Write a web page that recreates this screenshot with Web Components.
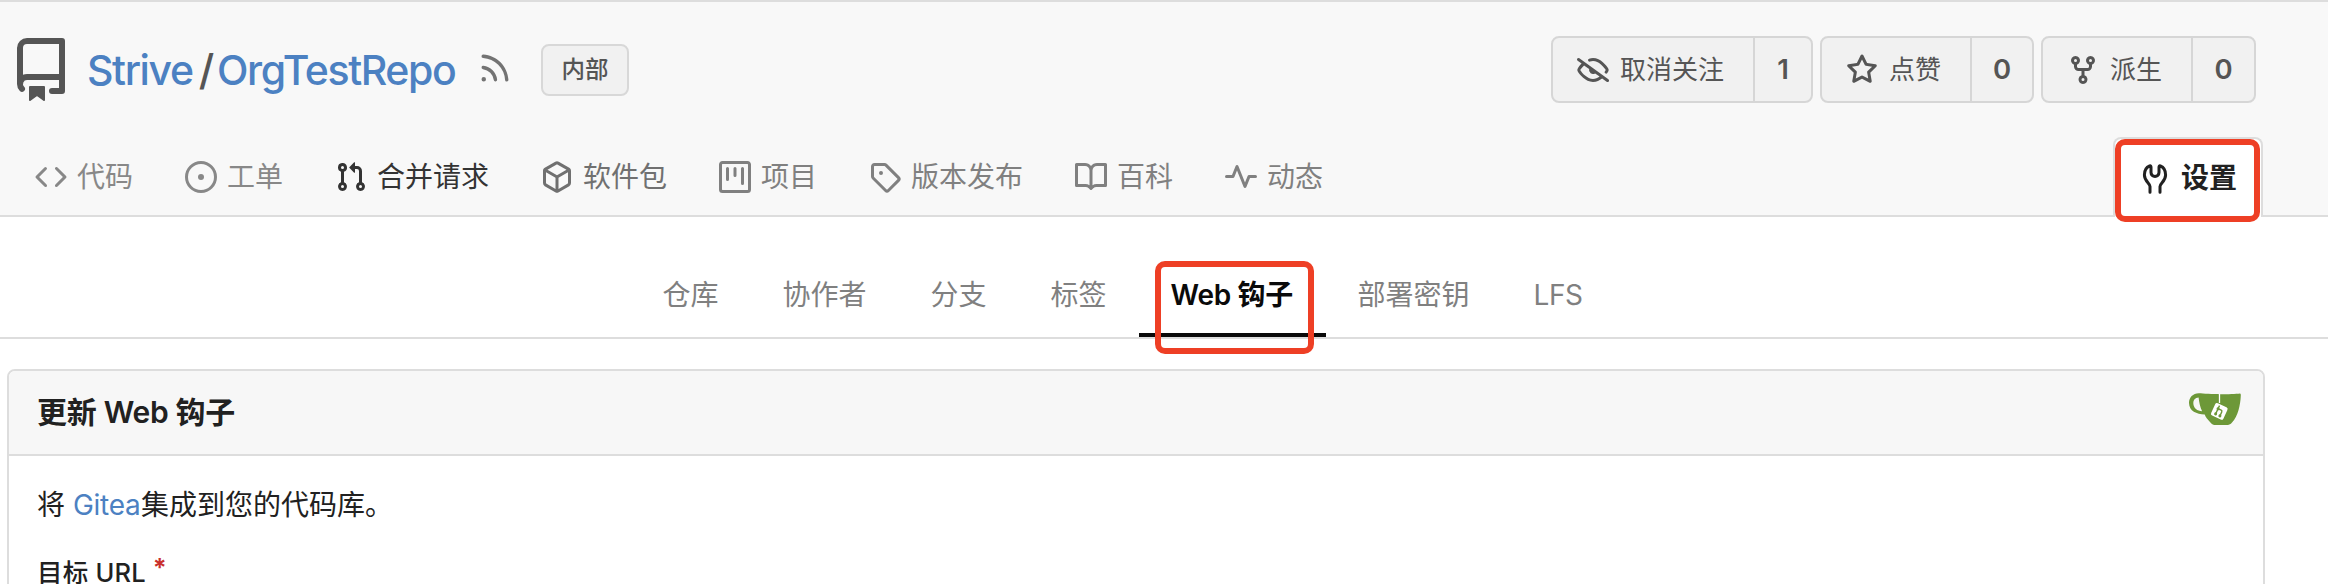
<!DOCTYPE html>
<html lang="zh-CN">
<head>
<meta charset="utf-8">
<title>Strive/OrgTestRepo</title>
<style>
body{margin:0;width:2328px;height:584px;overflow:hidden;background:#fff;color:#212121;font:28px/40px Inter,"Noto Sans CJK SC",sans-serif}
</style>
</head>
<body>
<repo-page></repo-page>
<script>
const ICONS={
repo:'<path d="M2 2.5A2.5 2.5 0 0 1 4.5 0h8.75a.75.75 0 0 1 .75.75v12.5a.75.75 0 0 1-.75.75h-2.5a.75.75 0 0 1 0-1.5h1.75v-2h-8a1 1 0 0 0-.714 1.7.75.75 0 1 1-1.072 1.05A2.495 2.495 0 0 1 2 11.5Zm10.5-1h-8a1 1 0 0 0-1 1v6.708A2.486 2.486 0 0 1 4.5 9h8ZM5 12.25a.25.25 0 0 1 .25-.25h3.5a.25.25 0 0 1 .25.25v3.25a.25.25 0 0 1-.4.2l-1.45-1.087a.249.249 0 0 0-.3 0L5.4 15.7a.25.25 0 0 1-.4-.2Z"/>',
rss:'<path d="M2.002 2.725a.75.75 0 0 1 .797-.699C8.79 2.42 13.58 7.21 13.974 13.201a.75.75 0 0 1-1.497.098 10.502 10.502 0 0 0-9.776-9.776.747.747 0 0 1-.7-.798ZM2.84 7.05h-.002a7.002 7.002 0 0 1 6.113 6.111.75.75 0 0 1-1.49.178 5.503 5.503 0 0 0-4.8-4.8.75.75 0 0 1 .179-1.489ZM2 13a1 1 0 1 1 2 0 1 1 0 0 1-2 0Z"/>',
code:'<path d="m11.28 3.22 4.25 4.25a.75.75 0 0 1 0 1.06l-4.25 4.25a.749.749 0 0 1-1.275-.326.749.749 0 0 1 .215-.734L13.94 8l-3.72-3.72a.749.749 0 0 1 .326-1.275.749.749 0 0 1 .734.215Zm-6.56 0a.751.751 0 0 1 1.042.018.751.751 0 0 1 .018 1.042L2.06 8l3.72 3.72a.749.749 0 0 1-.326 1.275.749.749 0 0 1-.734-.215L.47 8.53a.75.75 0 0 1 0-1.06Z"/>',
issue:'<path d="M8 9.5a1.5 1.5 0 1 0 0-3 1.5 1.5 0 0 0 0 3Z"/><path d="M8 0a8 8 0 1 1 0 16A8 8 0 0 1 8 0ZM1.5 8a6.5 6.5 0 1 0 13 0 6.5 6.5 0 0 0-13 0Z"/>',
pr:'<path d="M1.5 3.25a2.25 2.25 0 1 1 3 2.122v5.256a2.251 2.251 0 1 1-1.5 0V5.372A2.25 2.25 0 0 1 1.5 3.25Zm5.677-.177L9.573.677A.25.25 0 0 1 10 .854V2.5h1A2.5 2.5 0 0 1 13.5 5v5.628a2.251 2.251 0 1 1-1.5 0V5a1 1 0 0 0-1-1h-1v1.646a.25.25 0 0 1-.427.177L7.177 3.427a.25.25 0 0 1 0-.354ZM3.75 2.5a.75.75 0 1 0 0 1.5.75.75 0 0 0 0-1.5Zm0 9.5a.75.75 0 1 0 0 1.5.75.75 0 0 0 0-1.5Zm8.25.75a.75.75 0 1 0 1.5 0 .75.75 0 0 0-1.5 0Z"/>',
package:'<path d="m8.878.392 5.25 3.045c.54.314.872.89.872 1.514v6.098a1.75 1.75 0 0 1-.872 1.514l-5.25 3.045a1.75 1.75 0 0 1-1.756 0l-5.25-3.045A1.75 1.75 0 0 1 1 11.049V4.951c0-.624.332-1.201.872-1.514L7.122.392a1.75 1.75 0 0 1 1.756 0ZM7.875 1.69l-4.63 2.685L8 7.133l4.755-2.758-4.63-2.685a.248.248 0 0 0-.25 0ZM2.5 5.677v5.372c0 .09.047.171.125.216l4.625 2.683V8.432Zm6.25 8.271 4.625-2.683a.25.25 0 0 0 .125-.216V5.677L8.75 8.432Z"/>',
project:'<path d="M1.75 0h12.5C15.216 0 16 .784 16 1.75v12.5A1.75 1.75 0 0 1 14.25 16H1.75A1.75 1.75 0 0 1 0 14.25V1.75C0 .784.784 0 1.75 0ZM1.5 1.75v12.5c0 .138.112.25.25.25h12.5a.25.25 0 0 0 .25-.25V1.75a.25.25 0 0 0-.25-.25H1.75a.25.25 0 0 0-.25.25ZM11.75 3a.75.75 0 0 1 .75.75v7.5a.75.75 0 0 1-1.5 0v-7.5a.75.75 0 0 1 .75-.75Zm-8.25.75a.75.75 0 0 1 1.5 0v5.5a.75.75 0 0 1-1.5 0ZM8 3a.75.75 0 0 1 .75.75v3.5a.75.75 0 0 1-1.5 0v-3.5A.75.75 0 0 1 8 3Z"/>',
tag:'<path d="M1 7.775V2.75C1 1.784 1.784 1 2.75 1h5.025c.464 0 .91.184 1.238.513l6.25 6.25a1.75 1.75 0 0 1 0 2.474l-5.026 5.026a1.75 1.75 0 0 1-2.474 0l-6.25-6.25A1.752 1.752 0 0 1 1 7.775Zm1.5 0c0 .066.026.13.073.177l6.25 6.25a.25.25 0 0 0 .354 0l5.025-5.025a.25.25 0 0 0 0-.354l-6.25-6.25a.25.25 0 0 0-.177-.073H2.75a.25.25 0 0 0-.25.25ZM6 5a1 1 0 1 1 0 2 1 1 0 0 1 0-2Z"/>',
book:'<path d="M0 1.75A.75.75 0 0 1 .75 1h4.253c1.227 0 2.317.59 3 1.501A3.743 3.743 0 0 1 11.006 1h4.245a.75.75 0 0 1 .75.75v10.5a.75.75 0 0 1-.75.75h-4.507a2.25 2.25 0 0 0-1.591.659l-.622.621a.75.75 0 0 1-1.06 0l-.622-.621A2.25 2.25 0 0 0 5.258 13H.75a.75.75 0 0 1-.75-.75Zm7.251 10.324.004-5.073-.002-2.253A2.25 2.25 0 0 0 5.003 2.5H1.5v9h3.757a3.75 3.75 0 0 1 1.994.574ZM8.755 4.75l-.004 7.322a3.752 3.752 0 0 1 1.992-.572H14.5v-9h-3.495a2.25 2.25 0 0 0-2.25 2.25Z"/>',
pulse:'<path d="M6 2c.306 0 .582.187.696.471L10 10.731l1.304-3.26A.751.751 0 0 1 12 7h3.25a.75.75 0 0 1 0 1.5h-2.742l-1.812 4.528a.751.751 0 0 1-1.392 0L6 4.77 4.696 8.03A.75.75 0 0 1 4 8.5H.75a.75.75 0 0 1 0-1.5h2.742l1.812-4.529A.751.751 0 0 1 6 2Z"/>',
eye:'<path d="M.143 2.31a.75.75 0 0 1 1.047-.167l14.5 10.5a.75.75 0 1 1-.88 1.214l-2.248-1.628C11.346 13.19 9.792 14 8 14c-1.981 0-3.67-.992-4.933-2.078C1.797 10.832.88 9.577.43 8.9a1.619 1.619 0 0 1 0-1.797c.353-.533.995-1.42 1.868-2.305L.31 3.357A.75.75 0 0 1 .143 2.31Zm1.536 5.622A.12.12 0 0 0 1.657 8c0 .021.006.045.022.068.412.621 1.242 1.75 2.366 2.717C5.175 11.758 6.527 12.5 8 12.5c1.195 0 2.31-.488 3.29-1.191L9.063 9.695A2 2 0 0 1 6.058 7.52L3.529 5.688a14.207 14.207 0 0 0-1.85 2.244ZM8 3.5c-.516 0-1.017.09-1.499.251a.75.75 0 1 1-.473-1.423A6.207 6.207 0 0 1 8 2c1.981 0 3.67.992 4.933 2.078 1.27 1.091 2.187 2.345 2.637 3.023a1.62 1.62 0 0 1 0 1.798c-.11.166-.248.365-.41.587a.75.75 0 1 1-1.21-.887c.148-.201.272-.382.371-.53a.119.119 0 0 0 0-.137c-.412-.621-1.242-1.75-2.366-2.717C10.825 4.242 9.473 3.5 8 3.5Z"/>',
star:'<path d="M8 .25a.75.75 0 0 1 .673.418l1.882 3.815 4.21.612a.75.75 0 0 1 .416 1.279l-3.046 2.97.719 4.192a.751.751 0 0 1-1.088.791L8 12.347l-3.766 1.98a.75.75 0 0 1-1.088-.79l.72-4.194L.818 6.374a.75.75 0 0 1 .416-1.28l4.21-.611L7.327.668A.75.75 0 0 1 8 .25Zm0 2.445L6.615 5.5a.75.75 0 0 1-.564.41l-3.097.45 2.24 2.184a.75.75 0 0 1 .216.664l-.528 3.084 2.769-1.456a.75.75 0 0 1 .698 0l2.77 1.456-.53-3.084a.75.75 0 0 1 .216-.664l2.24-2.183-3.096-.45a.75.75 0 0 1-.564-.41L8 2.694Z"/>',
fork:'<path d="M5 5.372v.878c0 .414.336.75.75.75h4.5a.75.75 0 0 0 .75-.75v-.878a2.25 2.25 0 1 1 1.5 0v.878a2.25 2.25 0 0 1-2.25 2.25h-1.5v2.128a2.251 2.251 0 1 1-1.5 0V8.5h-1.5A2.25 2.25 0 0 1 3.5 6.25v-.878a2.25 2.25 0 1 1 1.5 0ZM5 3.25a.75.75 0 1 0-1.5 0 .75.75 0 0 0 1.5 0Zm6.75.75a.75.75 0 1 0 0-1.5.75.75 0 0 0 0 1.5Zm-3 8.75a.75.75 0 1 0-1.5 0 .75.75 0 0 0 1.5 0Z"/>',
tools:'<path d="M5.500 15.100V12.200C5.500 10.700 2.700 9.600 2.700 6.500C2.700 4.300 3.800 2.600 5.300 2C5.800 1.800 6 2.100 6 2.600V5.300C6 6.500 6.900 7.200 8 7.200S10 6.500 10 5.300V2.600C10 2.100 10.200 1.800 10.700 2C12.200 2.600 13.300 4.300 13.300 6.500C13.300 9.600 10.500 10.700 10.500 12.200V15.100" fill="none" stroke="currentColor" stroke-width="1.5" stroke-linecap="round" stroke-linejoin="round"/>'
};
const define=(name,html,fill)=>customElements.define(name,class extends HTMLElement{
  constructor(){super();this.attachShadow({mode:'open'}).innerHTML=html;}
  connectedCallback(){if(fill)fill(this,this.shadowRoot);}
});

define('octo-icon',`<style>:host{display:block;flex:none;width:32px;height:32px}svg{display:block;width:100%;height:100%;fill:currentColor;overflow:visible}</style><svg viewBox="0 0 16 16"></svg>`,
 (el,r)=>{r.querySelector('svg').innerHTML=ICONS[el.getAttribute('name')];});

define('repo-title',`<style>
:host{display:flex;align-items:center;height:64px;font-size:41px;line-height:64px;white-space:nowrap;color:#555}
.repo{width:64px;height:64px}
.owner,.name{color:#4c81c2;font-weight:480;flex:none}
.owner{width:109px;margin-left:14px;letter-spacing:-1.4px}
.sep{width:21px;flex:none;text-align:center;font-weight:500;font-size:42px}
.name{width:260px;letter-spacing:-1.4px}
.rss{width:36px;height:36px;color:#737373;margin-top:-5px}
.label{box-sizing:border-box;width:88px;height:52px;margin-left:28px;border:2px solid #d8d8d8;border-radius:8px;background:#f1f1f1;font-size:23.5px;line-height:48px;font-weight:500;text-align:center}
</style><octo-icon class="repo" name="repo"></octo-icon><span class="owner">Strive</span><span class="sep">/</span><span class="name">OrgTestRepo</span><octo-icon class="rss" name="rss"></octo-icon><span class="label">内部</span>`);

define('count-button',`<style>
:host{display:flex;box-sizing:border-box;height:67px;border:2px solid #d6d6d6;border-radius:8px;background:#f1f1f1;color:#555;line-height:62px;white-space:nowrap}
.action{display:flex;align-items:center;flex:1;padding-left:24px;font-size:26px}
octo-icon{margin-right:11px}
.count{box-sizing:border-box;width:var(--count,62px);border-left:2px solid #d6d6d6;text-align:center;font-weight:600;font-size:27.5px}
</style><div class="action"><slot></slot></div><div class="count"></div>`,
 (el,r)=>{
  const icon=document.createElement('octo-icon');
  icon.setAttribute('name',el.getAttribute('icon'));
  r.querySelector('.action').prepend(icon);
  r.querySelector('.count').textContent=el.getAttribute('count');
 });

define('repo-tab',`<style>
:host{display:flex;align-items:center;height:80px;color:#808080;margin-right:52px;white-space:nowrap}
:host([active]){box-sizing:border-box;width:150px;margin:0 65px 0 auto;padding-left:24px;border:2px solid #ddd;border-bottom:0;border-radius:8px 8px 0 0;background:#fff;color:#212121;font-weight:600}
</style><slot name="icon"></slot><slot></slot>`);

define('repo-header',`<style>
:host{display:flex;flex-direction:column;justify-content:space-between;box-sizing:border-box;height:217px;background:#f8f8f8;border-top:2px solid #ddd;border-bottom:2px solid #ddd}
.top{display:flex;justify-content:space-between;padding:34px 72px 0 9px}
.top repo-title{margin-top:2px}
.actions{display:flex;gap:7px}
.tabs{display:flex;padding-left:35px;margin-bottom:-2px}
.tabs octo-icon{margin-right:10px}
</style><div class="top"><repo-title></repo-title><div class="actions">
<count-button icon="eye" count="1" style="width:262px;--count:58px">取消关注</count-button>
<count-button icon="star" count="0" style="width:214px">点赞</count-button>
<count-button icon="fork" count="0" style="width:215px;--count:63px">派生</count-button></div></div>
<nav class="tabs">
<repo-tab style="color:#888"><octo-icon slot="icon" name="code"></octo-icon>代码</repo-tab>
<repo-tab style="color:#888"><octo-icon slot="icon" name="issue"></octo-icon>工单</repo-tab>
<repo-tab style="color:#333"><octo-icon slot="icon" name="pr"></octo-icon>合并请求</repo-tab>
<repo-tab style="color:#707070"><octo-icon slot="icon" name="package"></octo-icon>软件包</repo-tab>
<repo-tab><octo-icon slot="icon" name="project"></octo-icon>项目</repo-tab>
<repo-tab><octo-icon slot="icon" name="tag"></octo-icon>版本发布</repo-tab>
<repo-tab><octo-icon slot="icon" name="book"></octo-icon>百科</repo-tab>
<repo-tab><octo-icon slot="icon" name="pulse"></octo-icon>动态</repo-tab>
<repo-tab active><octo-icon slot="icon" name="tools"></octo-icon>设置</repo-tab>
</nav>`);

define('settings-nav',`<style>
:host{display:flex;box-sizing:border-box;height:122px;padding:35px 0 0 630.5px;border-bottom:2px solid #ddd;color:#808080;line-height:86px;white-space:nowrap}
span{box-sizing:border-box;height:85px;padding:0 32px;flex:none}
.active{width:187px;color:#0a0a0a;font-weight:600;border-bottom:4px solid #0a0a0a;letter-spacing:-.3px}
.lfs{letter-spacing:-.5px}
</style><span>仓库</span><span>协作者</span><span>分支</span><span>标签</span><span class="active">Web 钩子</span><span>部署密钥</span><span class="lfs">LFS</span>`);

define('gitea-logo',`<style>:host{display:block;flex:none;width:52px;height:32px}svg{display:block}</style>
<svg width="52" height="32" viewBox="0 0 52 32"><path fill="#6d9838" fill-rule="evenodd" d="M10 .3C14 .6 24 1.100 31 1.200c8 0 16-.4 20-.8.7.2.9.8.8 2C51.400 12 49 23 43 29.500c-1.600 1.900-2.500 2.200-4.300 2.400H25.500c-1.700 0-2.600-.8-4.300-2.600-3-3.300-4.500-5-5.500-7.800C7.500 21 .2 18.300 0 10 0 4.500 4 .2 10 .3ZM9.600 4.500C6 4.800 4.200 7 4.300 10c.2 5.500 4 8 8.800 8.200-2-4-3-9-3.500-13.700Z"/><path d="M30.500 1v9" stroke="#fff" stroke-width="1.300"/><rect x="23.500" y="11.700" width="13.500" height="13.500" rx="2" fill="#fff" transform="rotate(25 30.200 18.500)"/><g transform="rotate(25 30.200 18.500)" fill="none" stroke="#6d9838" stroke-width="1.400"><path d="M28 13v10M28 16.500h3.500q1.200 0 1.200 1.500v4.500"/><g fill="#6d9838" stroke="none"><circle cx="28" cy="16.500" r="1.500"/><circle cx="28" cy="22.200" r="1.500"/><circle cx="32.700" cy="22.200" r="1.500"/></g></g></svg>`);

define('hook-panel',`<style>
:host{display:block;box-sizing:border-box;width:2258px;height:240px;margin:30px 0 0 7px;border:2px solid #ddd;border-radius:8px;white-space:nowrap;overflow:hidden}
header{display:flex;justify-content:space-between;box-sizing:border-box;height:85px;padding:0 22px 0 28px;border-bottom:2px solid #ddd;background:#f7f7f7;font-size:30px;line-height:82px;font-weight:600;letter-spacing:-.3px}
gitea-logo{margin-top:22px}
.body{padding:29px 28px 0;line-height:40px}
p{margin:0;display:flex}
a{color:#4c81c2;margin:0 0 0 8px;width:68px;letter-spacing:-.3px}
.label{margin-top:31px;font-size:25.5px;line-height:34px;font-weight:550;letter-spacing:.2px}
.star{color:#c9302c;margin:-5px 0 0 7px;font-size:25px;font-weight:700}
</style><header><span>更新 Web 钩子</span><gitea-logo></gitea-logo></header>
<div class="body"><p>将 <a>Gitea</a>集成到您的代码库。</p><p class="label">目标 URL<span class="star">*</span></p></div>`);

define('mark-box',`<style>:host{position:absolute;box-sizing:border-box;border:6px solid #ee3f25;border-radius:10px}</style>`);

define('repo-page',`<style>:host{display:block;position:relative;height:584px;overflow:hidden}</style>
<repo-header></repo-header><settings-nav></settings-nav><hook-panel></hook-panel>
<mark-box style="left:2115px;top:139px;width:145px;height:83px"></mark-box>
<mark-box style="left:1155px;top:261px;width:159px;height:93px"></mark-box>`);
</script>
</body>
</html>
